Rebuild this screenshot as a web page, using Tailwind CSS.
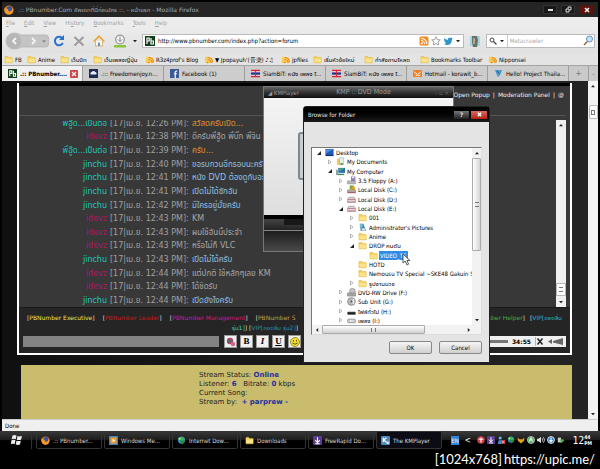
<!DOCTYPE html>
<html lang="th">
<head>
<meta charset="utf-8">
<title>PBnumber.Com - Mozilla Firefox</title>
<script src="https://cdn.jsdelivr.net/npm/@tailwindcss/browser@4"></script>
</head>
<body class="min-h-screen bg-black font-['DejaVu_Sans_Condensed','Noto_Sans_Thai','Noto_Sans',sans-serif] text-[6px] leading-[9px] text-black">
<svg class="hidden" xmlns="http://www.w3.org/2000/svg">
  <symbol id="folder" viewBox="0 0 10 10"><path d="M1 2.2Q1 1.5 1.7 1.5H4l1 1.2h3.6q.6 0 .6.7V8q0 .7-.7.7H1.600Q1 8.700 1 8z" fill="#f3cf57" stroke="#dcae38" stroke-width=".5"/><path d="M1.500 4h7.300v4H1.500z" fill="#fce38a"/></symbol>
  <symbol id="rss" viewBox="0 0 10 10"><rect x=".5" y=".5" width="9" height="9" rx="1.500" fill="#f08a24"/><circle cx="2.800" cy="7.300" r="1" fill="#fff"/><path d="M2 4.500a3.500 3.500 0 0 1 3.500 3.500M2 2.200A5.800 5.800 0 0 1 7.800 8" fill="none" stroke="#fff" stroke-width="1.100"/></symbol>
  <symbol id="feedfolder" viewBox="0 0 10 10"><path d="M1 2h3l1 1h4v6H1z" fill="#f6cf5a"/><path d="M4 5a4 4 0 0 1 4 4M4 2.500A6 6 0 0 1 9.500 8" fill="none" stroke="#ea8a20" stroke-width="1.300"/><circle cx="4" cy="8.300" r="1" fill="#ea8a20"/></symbol>
  <symbol id="fox" viewBox="0 0 12 12"><circle cx="6" cy="6" r="5.500" fill="#e8721b"/><circle cx="6.600" cy="5" r="3.600" fill="#2d55a8"/><path d="M.8 3C2 5 3 4 5.500 5.200 4.500 6 5 7.500 6.500 7.600 9 8 10 6 9.800 2.500 12.500 6 11 11.500 6 11.500 1 11.500-.2 7 .8 3z" fill="#f39a2c"/></symbol>
  <symbol id="pb" viewBox="0 0 10 10"><path d="M0 0h10v10H0z" fill="#123d1b"/><path d="M2 8V2h2.200v3H2M6 2v6h2.400V5H6" fill="none" stroke="#fff" stroke-width="1.200"/></symbol>
  <symbol id="cloud" viewBox="0 0 10 10"><path d="M0 0h10v10H0z" fill="#1d2c52"/><path d="M2 6a1.500 1.500 0 0 1 1-2.600 2.200 2.200 0 0 1 4 0A1.500 1.500 0 0 1 8 6z" fill="#e3ebfa"/></symbol>
  <symbol id="fb" viewBox="0 0 10 10"><path d="M0 0h10v10H0z" fill="#3b5998"/><path d="M8 2.300H7q-1.200 0-1.200 1.300V10M4.300 5.300h3.500" fill="none" stroke="#fff" stroke-width="1.300"/></symbol>
  <symbol id="thai" viewBox="0 0 10 10"><path d="M0 1h10v8H0z" fill="#fff"/><path d="M0 .8h10v1.700H0zM0 7.500h10v1.700H0z" fill="#d8232e"/><path d="M0 3.700h10v2.700H0z" fill="#26328c"/><path d="M5 1v8" stroke="#d8232e"/></symbol>
  <symbol id="hot" viewBox="0 0 10 10"><rect y="1" width="10" height="8" rx="1" fill="#ee7f22"/><path d="M1 3l4 3 4-3M3 7h5" fill="none" stroke="#fff"/></symbol>
  <symbol id="hello" viewBox="0 0 10 10"><path d="M1 1h8L6 8.500H4z" fill="#4a9bcb"/><path d="M3 2l3 3" stroke="#204b88"/><path d="M7 6l2 3H5z" fill="#b8d4e4"/></symbol>
  <symbol id="desk" viewBox="0 0 10 10"><path d="M.5 1h9v7h-9z" fill="#2458b8"/><path d="M1 1.500h8L1 6z" fill="#4f8ae0"/><path d="M.5 7.500h9V9h-9z" fill="#16356f"/></symbol>
  <symbol id="docs" viewBox="0 0 10 10"><path d="M1 2h4l1 1h2v6H1z" fill="#efcd58"/><path d="M4 .8h4.500v6.500H4z" fill="#e6f0f5" stroke="#7c9cb0" stroke-width=".5"/><path d="M5 7h3v2H5z" fill="#5c9a5f"/></symbol>
  <symbol id="comp" viewBox="0 0 10 10"><path d="M2.500 1H10v5.500H2.500z" fill="#2c6bb5"/><path d="M3 1.500h6.500L4 5z" fill="#48ad67"/><path d="M0 3h2.500v6H0z" fill="#8ba6ae"/><path d="M2 7.500h7V9H2z" fill="#3a8a54"/></symbol>
  <symbol id="floppy" viewBox="0 0 10 10"><path d="M4.500.5h4.800v5H4.500z" fill="#8780b8"/><path d="M5.500.5h2.600v2H5.500z" fill="#e8e6f8"/><path d="M.5 5.500h9v3.300h-9z" fill="#bdb5bd" stroke="#7f7580" stroke-width=".5"/></symbol>
  <symbol id="sysdisk" viewBox="0 0 10 10"><path d="M3 .5h4.500v4.500H3z" fill="#77a53c"/><path d="M5 2h4v3.500H5z" fill="#d9a62a"/><path d="M.5 5.500h9v3.300h-9z" fill="#c9c0b8" stroke="#7b6868" stroke-width=".6"/><path d="M1 8h8" stroke="#a23c44"/></symbol>
  <symbol id="disk" viewBox="0 0 10 10"><path d="M2 2.500h6l1.500 2.500v3h-9V5z" fill="#ddd4d6" stroke="#8c7a80" stroke-width=".6"/><path d="M.6 8h8.800M1 5h8" stroke="#b65560" stroke-width=".7"/></symbol>
  <symbol id="pics" viewBox="0 0 10 10"><path d="M2 .8h4l3 8H3z" fill="#4288b8"/><path d="M2 1h3v4H2z" fill="#79bfd3"/><path d="M4 6h4v2.500H4z" fill="#d8ecf2"/></symbol>
  <symbol id="dvd" viewBox="0 0 10 10"><circle cx="6" cy="3.600" r="3.200" fill="#c5c5c5" stroke="#777" stroke-width=".6"/><path d="M.5 5.500h9v3.500h-9z" fill="#a7a7a7" stroke="#666" stroke-width=".5"/></symbol>
  <symbol id="disc" viewBox="0 0 10 10"><circle cx="5" cy="5" r="4.300" fill="#bcbcbc" stroke="#666" stroke-width=".7"/><path d="M5 5L8 1v8z" fill="#efefef"/><circle cx="5" cy="5" r="1.200" fill="#555"/></symbol>
  <symbol id="black" viewBox="0 0 10 10"><path d="M.5 5.500h9v3h-9z" fill="#222"/><path d="M1 5.500h8" stroke="#777" stroke-width=".6"/></symbol>
  <symbol id="grey" viewBox="0 0 10 10"><rect x=".5" y="3.500" width="9" height="4" rx="1.500" fill="#c7c7c7" stroke="#777" stroke-width=".7"/><path d="M3 5.500h4" stroke="#fff"/></symbol>
  <symbol id="media" viewBox="0 0 10 10"><path d="M0 0h10v10H0z" fill="#3686c6"/><rect x="1.500" y="1.500" width="7" height="7" rx="1" fill="#f29a2a"/><path d="M4 3l3 2-3 2z" fill="#fff"/></symbol>
  <symbol id="idm" viewBox="0 0 10 10"><circle cx="5" cy="4.500" r="4" fill="#2f8ecb"/><path d="M1 3q4-4 7 0L6 6 3 5z" fill="#42b54a"/><path d="M3 5h6L6 9.500z" fill="#278a2d"/><circle cx="3" cy="3" r="1" fill="#f0e23a"/></symbol>
  <symbol id="rapid" viewBox="0 0 10 10"><rect width="10" height="10" rx="1" fill="#5b3d8f"/><path d="M5 1.500v5M2.500 4.500L5 7.500l2.500-3M2.500 8.700h5" fill="none" stroke="#fff" stroke-width="1.200"/></symbol>
  <symbol id="km" viewBox="0 0 10 10"><rect width="10" height="10" rx="1.500" fill="#4b89bd"/><path d="M2.500 2v5M6 2L3 4.500 6 7" fill="none" stroke="#fff" stroke-width="1.300"/><path d="M6 6h3v3H6z" fill="#cfe4f5"/></symbol>
  <symbol id="up" viewBox="0 0 6 6"><path d="M3 2l2 2.200H1z" fill="#222"/></symbol>
  <symbol id="down" viewBox="0 0 6 6"><path d="M1 2h4L3 4.200z" fill="#222"/></symbol>
</svg>

<div class="flex min-h-screen flex-col">
<div class="relative flex flex-col px-0.5 pt-0.5">

  <header class="flex h-[15px] items-center gap-1 bg-[#252525] pl-[2px] pr-1 text-[#a8a8a8]">
    <svg class="size-[10px]"><use href="#fox"/></svg>
    <h1 class="flex-1 whitespace-nowrap font-['DejaVu_Sans','Noto_Sans_Thai',sans-serif]">.:: PBnumber.Com อัพเดทที่นี่ก่อนใคร ::. - หน้าแรก - Mozilla Firefox</h1>
    <button aria-label="Minimize" class="flex h-[9px] w-[14px] items-end justify-center border border-[#333] bg-[#181818] pb-[2px]"><span class="h-[2px] w-[5px] bg-[#ddd]"></span></button>
    <button aria-label="Restore" class="grid h-[9px] w-[14px] place-items-center border border-[#333] bg-[#181818]"><svg class="size-[7px]" viewBox="0 0 7 7"><path d="M3 2.500V1h3v3H4.500" fill="none" stroke="#ddd"/><path d="M1 3h3v3H1z" fill="none" stroke="#ddd"/></svg></button>
    <button aria-label="Close" class="grid h-[9px] w-[15px] place-items-center border border-[#4a1712] bg-[#5b140d]"><svg class="size-[6px]" viewBox="0 0 6 6"><path d="M1 1l4 4M5 1L1 5" stroke="#fff" stroke-width="1.400"/></svg></button>
  </header>

  <nav class="flex h-[11px] items-center gap-[9px] bg-[#ececec] pl-1 text-[#a2a2a2]">
    <button><u>F</u>ile</button><button><u>E</u>dit</button><button><u>V</u>iew</button><button>Hi<u>s</u>tory</button><button><u>B</u>ookmarks</button><button><u>T</u>ools</button><button><u>H</u>elp</button>
  </nav>

  <div class="flex h-[25px] items-center bg-linear-to-b from-[#ececec] to-[#e0e0e0] pl-[3px] pr-[3px]">
    <svg class="h-[18px] w-[44px]" viewBox="0 0 44 18"><path d="M9 1q5 0 7 2h25q2.500 0 2.500 3v6q0 3-2.500 3H16q-2 2-7 2A8 8 0 0 1 9 1z" fill="#c4c4c4" stroke="#b0b0b0" stroke-width=".7"/><circle cx="9" cy="9" r="7.500" fill="#b6b6b6"/><path d="M11 6L8 9l3 3M27 6l3 3-3 3" fill="none" stroke="#f4f4f4" stroke-width="1.800"/><path d="M37 8.500h4l-2 2z" fill="#777"/></svg>
    <div class="ml-[4px] flex items-center gap-[8px]">
      <svg class="size-3" viewBox="0 0 12 12"><path d="M9.800 8A4.200 4.200 0 1 1 9 3" fill="none" stroke="#2a70d0" stroke-width="2"/><path d="M11 0v5H6z" fill="#2a70d0"/></svg>
      <svg class="size-3" viewBox="0 0 12 12"><path d="M1.500 2l9 8.500M10.500 2l-9 8.500" stroke="#9b9b9b" stroke-width="2"/></svg>
      <svg class="size-3" viewBox="0 0 12 12"><path d="M2.500 6v5h7V6" fill="#fff8e4" stroke="#c08a4c" stroke-width=".6"/><path d="M.7 6.500L6 1.300l5.300 5.200" fill="none" stroke="#e9a63a" stroke-width="1.700"/><path d="M5 7.500h2V11H5z" fill="#6a90bd"/></svg>
      <svg class="size-[14px]" viewBox="0 0 14 14"><path d="M1 11h12v2.500H1z" fill="#87c63b"/><circle cx="7" cy="5.500" r="4.300" fill="#f5f5f5" stroke="#9a9a9a" stroke-width="1.300"/><path d="M7 2.500v5M5 5.500l2 2 2-2" fill="none" stroke="#888"/></svg>
    </div>
    <svg class="ml-[5px] size-[6px]"><use href="#down"/></svg>
    <label class="ml-[4px] flex h-[14px] min-w-0 flex-3 items-center border border-[#bbb] bg-white px-[2px]">
      <svg class="size-[10px] shrink-0"><use href="#pb"/></svg>
      <input aria-label="Address" class="ml-[3px] min-w-0 flex-1 outline-none" value="http://www.pbnumber.com/index.php?action=forum">
      <svg class="size-[10px]"><use href="#rss"/></svg>
      <svg class="ml-[2px] size-[10px]" viewBox="0 0 10 10"><path d="M5 .8l1.300 2.800 3 .3L7 6l.7 3L5 7.500 2.300 9 3 6 .7 3.900l3-.3z" fill="#fff" stroke="#777" stroke-width=".7"/></svg>
      <svg class="ml-[2px] size-[10px]" viewBox="0 0 10 10"><path d="M.8 2q2 2 4 1.800Q5 1.500 7 1.500l1 .5 1.500-.3L9 3.500Q8.500 9 4 9 2 9 1 8l2-.6Q.8 5 .8 2z" fill="#2d94c8"/></svg>
      <svg class="ml-[2px] size-[6px]"><use href="#down"/></svg>
    </label>
    <svg class="mx-[5px] size-[12px]" viewBox="0 0 12 12"><path d="M1 1h10v10H1z" fill="#a3d9e6"/><path d="M3 1h5l1 4-1 7H4L3 7z" fill="#69706c"/><path d="M4 3h2v6H4z" fill="#c2a57b"/></svg>
    <label class="flex h-[14px] min-w-0 flex-1 items-center border border-[#bbb] bg-white pl-[2px]">
      <svg class="size-[8px] shrink-0" viewBox="0 0 8 8"><circle cx="3" cy="3" r="2" fill="none" stroke="#444"/><path d="M4.500 4.500L7.500 7.500" stroke="#444" stroke-width="1.300"/></svg>
      <svg class="ml-[2px] size-[6px] shrink-0"><use href="#down"/></svg>
      <input aria-label="Search" class="ml-[2px] h-full min-w-0 flex-1 border-l border-[#ccc] pl-[2px] outline-none placeholder:text-[#aaa]" placeholder="Metacrawler">
      <svg class="size-[11px] shrink-0" viewBox="0 0 11 11"><circle cx="6.500" cy="4" r="3" fill="#c5e2f7" stroke="#5c93c5"/><path d="M4.300 6.500L1 10" stroke="#a06a42" stroke-width="1.600"/></svg>
    </label>
  </div>

  <nav class="flex h-3 items-center overflow-hidden whitespace-nowrap bg-[#e4e4e4] pl-[2px]" id="bookmarks"></nav>

  <nav class="flex h-4 overflow-hidden border-t border-[#a5a5a5] bg-[#c9c9c9]" id="tabs"></nav>

  <div class="flex bg-linear-to-r from-[#101010] to-[#242424]">
    <main class="min-w-0 flex-1 pr-4">
      <section class="ml-[15px] mt-[2px] border-2 border-t-0 border-white bg-[#252525]">
        <div class="h-[3px] bg-black"></div>
        <div class="bg-[#383838] pr-1">
          <div class="flex h-[30px] justify-end gap-[3px] border-b border-[#555] pr-[2px] pt-1 font-['DejaVu_Sans',sans-serif] text-[#eee]">
            <a href="#">Open Popup</a>|<a href="#">Moderation Panel</a>|<a href="#">@</a>
          </div>
          <div class="mt-1 flex h-[187px]">
            <div class="flex flex-1 flex-col justify-end overflow-hidden">
              <ol id="chat" class="grid h-[191px] shrink-0 auto-rows-fr font-['DejaVu_Sans','Noto_Sans_Thai',sans-serif] text-[8px] leading-[13px]"></ol>
            </div>
            <div class="flex w-[10px] flex-col items-center justify-between bg-[#f0f0f0] py-[2px]" aria-hidden="true">
              <svg class="size-[6px]"><use href="#up"/></svg><div class="mt-auto mb-[3px] flex h-[13px] w-full items-center justify-center border border-[#bbb] bg-white"><span class="h-[5px] w-[4px] border-y border-[#777]"></span></div><svg class="size-[6px]"><use href="#down"/></svg>
            </div>
          </div>
        </div>
        <div class="flex justify-between whitespace-nowrap border-t border-[#1a1a1a] px-2 pt-[5px] font-['DejaVu_Sans','Noto_Sans_Thai',sans-serif] leading-[10px] text-[#ddd]">
          <div class="flex gap-2"><span>[<a href="#" class="text-[#e8e84a]">PBNumber Executive</a>]</span><span>[<a href="#" class="text-[#c01d1d]">PBNumber Leader</a>]</span><span>[<a href="#" class="text-[#cc1c80]">PBNumber Management</a>]</span><span>[<a href="#" class="text-[#d89a3c]">PBNumber S</a></span></div>
          <div class="flex gap-[5px]"><span><a href="#" class="text-[#3fae4c]">PBNumber Helper</a>]</span><span>[<a href="#" class="text-[#28b8c0]">VIP[ถอดลิ่ม</a></span></div>
        </div>
        <div class="pb-[2px] pl-[213px] font-['DejaVu_Sans','Noto_Sans_Thai',sans-serif] leading-[10px] text-[#ddd]"><a href="#" class="text-[#3fd0c8]">รุ่น1]</a>] [<a href="#" class="text-[#2a8fae]">VIP[ถอดลิ่ม รุ่น2]</a>]</div>
        <div class="flex items-center gap-[3px] px-1 pb-[5px]">
          <input aria-label="Message" class="mr-[2px] h-[11px] w-[196px] bg-[#838383] outline-none">
          <button aria-label="Font colour" class="grid size-[13px] place-items-center border border-[#999] bg-[#f0f0f0]"><svg class="size-[10px]" viewBox="0 0 10 10"><circle cx="4" cy="4" r="3.200" fill="#a44769"/><circle cx="3.500" cy="4" r="1.500" fill="#4f6b76"/><circle cx="7" cy="7" r="2.300" fill="#d9668a"/></svg></button>
          <button class="size-[13px] border border-[#999] bg-[#f0f0f0] font-['Liberation_Serif',serif] text-[9px] font-bold leading-[11px]">B</button>
          <button class="size-[13px] border border-[#999] bg-[#f0f0f0] font-['Liberation_Serif',serif] text-[9px] font-bold italic leading-[11px]">I</button>
          <button class="size-[13px] border border-[#999] bg-[#f0f0f0] font-['Liberation_Serif',serif] text-[9px] font-bold leading-[11px] underline">U</button>
          <button aria-label="Smileys" class="grid size-[13px] place-items-center border border-[#999] bg-[#f0f0f0]"><svg class="size-[10px]" viewBox="0 0 10 10"><circle cx="5" cy="5" r="4.500" fill="#f6dc2c" stroke="#7b6a10" stroke-width=".7"/><path d="M3.500 3v1.500M6.500 3v1.500M2.500 6q2.500 2.500 5 0" fill="none" stroke="#333" stroke-width=".8"/></svg></button>
          <div class="ml-auto flex h-[11px] w-[110px] items-center justify-end gap-[4px] bg-[#efefef] pr-[3px] font-['DejaVu_Sans',sans-serif] font-bold">
            <span class="h-[3px] flex-1 bg-[#777]"></span>34:55
            <svg class="size-[9px]" viewBox="0 0 9 9"><path d="M.5 0v9" stroke="#999" stroke-width=".7"/><path d="M2.500 1.500l5 6M7.500 1.500l-5 6" stroke="#222" stroke-width="1.500"/></svg>
            <svg class="h-[7px] w-[15px]" viewBox="0 0 15 7"><path d="M0 3.500L4 1v5zM5 3L15 0v7L5 4.500z" fill="#666"/></svg>
          </div>
        </div>
      </section>
      <section class="ml-[19px] mt-[10px] h-[54px] bg-[#cabc6d] pl-[178px] pt-[6px] font-['DejaVu_Sans',sans-serif] text-[7px] leading-[9px] text-[#222]">
        <p>Stream Status: <b class="text-[#1b2fa0]">Online</b></p>
        <p>Listener: <b class="text-[#1b2fa0]">6</b> &nbsp; Bitrate: <b class="text-[#1b2fa0]">0</b> kbps</p>
        <p>Current Song:</p>
        <p>Stream by: &nbsp;<b class="text-[#1b2fa0]">+ parprew -</b></p>
      </section>
    </main>
    <div class="flex w-[10px] flex-col items-center bg-[#f3f3f3] py-[2px]" aria-hidden="true">
      <svg class="size-[6px]"><use href="#up"/></svg>
      <div class="mt-4 flex h-[14px] w-[9px] items-center justify-center rounded-[1px] border border-[#bbb] bg-white"><span class="h-[5px] w-[4px] border border-[#777]"></span></div>
      <svg class="mt-auto size-[6px]"><use href="#down"/></svg>
    </div>
  </div>

  <div class="h-3 border-t border-[#ccc] bg-[#f0eff0] pl-[3px] leading-[11px]">Done</div>

  <!-- KMPlayer window -->
  <section class="absolute left-[263px] top-[86px] w-[191px] border border-[#777] bg-[#222]">
    <div class="flex h-[11px] items-center justify-between bg-linear-to-b from-[#666] via-[#333] to-[#111] px-1 text-[#999]"><span class="w-[60px]">◢ KMPlayer</span><span class="text-[7px]">KMP :: DVD Mode</span><span class="w-[50px] text-right text-[#666]">– ▫ ×</span></div>
    <div class="flex h-[117px] flex-col bg-linear-to-b from-[#f4f4f4] to-[#dedede] pt-[34px]"><div class="ml-[34px] h-[48px] w-[60px] rounded-[3px] border-2 border-[#7c8790] bg-[#ccc]"></div></div>
    <div class="h-[4px] bg-black"></div>
    <div class="flex h-[12px] justify-start border-b border-[#888] bg-linear-to-b from-[#444] to-[#222] pl-5"><span class="h-[6px] w-20 bg-[#181818]"></span></div>
    <div class="h-[20px] bg-linear-to-b from-[#1d1d1d] to-[#4a4a4a]"></div>
  </section>

  <!-- Browse for Folder dialog -->
  <section role="dialog" aria-labelledby="dlg" class="absolute left-[303px] top-[106px] w-[187px] rounded-t-[3px] border border-[#222] bg-[#e4e4e4]">
    <div class="flex h-[15px] items-center gap-[2px] bg-linear-to-b from-black to-[#1c1c1c] pl-1 pr-[2px] text-[#e4e4e4]">
      <h2 id="dlg" class="flex-1">Browse for Folder</h2>
      <button aria-label="Help" class="h-[8px] w-[15px] bg-linear-to-b from-[#777] to-[#222] font-bold leading-[8px]">?</button>
      <button aria-label="Close" class="grid h-[8px] w-[16px] place-items-center bg-linear-to-b from-[#d8695c] to-[#b51a10]"><svg class="size-[5px]" viewBox="0 0 6 6"><path d="M1 1l4 4M5 1L1 5" stroke="#fff" stroke-width="1.600"/></svg></button>
    </div>
    <div class="px-[7px] pb-[8px] pt-[25px]">
      <div class="border border-[#777] border-b-[#ddd] border-r-[#ddd] bg-white">
        <div class="flex h-[177px]">
          <ul id="tree" class="grid min-w-0 flex-1 auto-rows-fr overflow-hidden whitespace-nowrap"></ul>
          <div class="flex w-[9px] flex-col items-center bg-[#f2f2f2]" aria-hidden="true">
            <svg class="my-[2px] size-[6px]"><use href="#up"/></svg><div class="flex h-[93px] w-full items-center justify-center rounded-[1px] border border-[#aaa] bg-linear-to-r from-white to-[#d5d5d5]"><span class="h-[5px] w-[4px] border-y border-[#777]"></span></div><svg class="mb-[2px] mt-auto size-[6px]"><use href="#down"/></svg>
          </div>
        </div>
        <div class="flex h-[9px] items-center bg-[#f2f2f2] pr-[9px]" aria-hidden="true">
          <svg class="mx-[2px] size-[6px] -rotate-90"><use href="#up"/></svg><div class="flex h-[9px] w-[103px] items-center justify-center rounded-[1px] border border-[#aaa] bg-linear-to-b from-white to-[#d0d0d0]"><span class="h-[4px] w-[5px] border-x border-[#777]"></span></div><svg class="ml-auto size-[6px] rotate-90"><use href="#up"/></svg>
        </div>
      </div>
      <div class="mt-[6px] flex justify-end gap-[7px]">
        <button class="h-[13px] w-[43px] rounded-[2px] border border-[#888] bg-linear-to-b from-[#f5f5f5] to-[#d0d0d0]">OK</button>
        <button class="h-[13px] w-[43px] rounded-[2px] border border-[#888] bg-linear-to-b from-[#f5f5f5] to-[#d0d0d0]">Cancel</button>
      </div>
    </div>
  </section>
  <svg class="absolute left-[402px] top-[253px] h-[13px] w-[9px]" viewBox="0 0 9 13"><path d="M1 1v9l2.200-2L5 12l1.600-.8L5 7.500h3z" fill="#fff" stroke="#333" stroke-width=".8"/></svg>
</div>

<div class="flex h-[18px] items-center bg-linear-to-b from-[#3a3a3a] from-0% via-[#1c1c1c] via-50% to-black to-55% px-0.5 text-[#ddd]">
  <button aria-label="Start" class="grid h-full w-[30px] place-items-center border-r border-[#333]"><svg class="size-3" viewBox="0 0 12 12"><path d="M1.500 1.500q2-1 4 0L4.700 5.200q-2-.8-4 0zM6.500 2q2 .8 4.500 0L10 5.700q-2 .8-4.200 0zM.5 6.200q2-.8 4 0l-.8 3.900q-2-.9-4 0zM5.500 6.700q2 .8 4.300 0L9 10.600q-2 .8-4.300 0z" fill="#eee"/></svg></button>
  <div class="ml-1 flex h-full min-w-0 gap-[2px]" id="tasks"></div>
  <div class="ml-auto flex items-center gap-[2px] pr-[6px]">
    <span class="mr-1 bg-[#2c85d6] text-white">EN</span><span class="mr-[4px] text-[8px] text-white">&lt;</span>
    <svg class="size-2" viewBox="0 0 10 10"><circle cx="5" cy="5" r="4.700" fill="#d23b40"/><path d="M2 4h6M5 2v6" stroke="#fff" stroke-width="1.400"/></svg>
    <svg class="size-2"><use href="#rapid"/></svg>
    <svg class="size-2" viewBox="0 0 10 10"><circle cx="4" cy="2.500" r="2" fill="#6bb4ec"/><path d="M1 10q0-5 3-5t3 5z" fill="#3f86cf"/><path d="M5 5h5v5H5z" fill="#d43a3a"/><path d="M6 7.500h3" stroke="#fff"/></svg>
    <svg class="size-2"><use href="#idm"/></svg>
    <svg class="size-2" viewBox="0 0 10 10"><path d="M1 2l2 2h4l2-2v4L5 9.500 1 6z" fill="#e3a01e"/></svg>
    <svg class="size-2" viewBox="0 0 10 10"><circle cx="5" cy="5" r="4.500" fill="#57b167" stroke="#ddd" stroke-width=".8"/><path d="M3 7l2-5 2 5M3 5h4" fill="none" stroke="#fff"/></svg>
    <svg class="size-2" viewBox="0 0 10 10"><path d="M0 3.500h2L5 1v8L2 6.500H0z" fill="#ddd"/><path d="M6.500 3q1.500 2 0 4M8 1.500q3 3.500 0 7" fill="none" stroke="#ddd"/></svg>
    <svg class="size-2" viewBox="0 0 10 10"><circle cx="5" cy="5" r="4.300" fill="#2f80c0" stroke="#fff"/><path d="M5 2v5M3 5l2 2.500L7 5" fill="none" stroke="#fff" stroke-width="1.300"/></svg>
    <svg class="size-2" viewBox="0 0 10 10"><path d="M1 2h4v6H1z" fill="#ccc"/><path d="M4 4h4l1 2-4 3z" fill="#4cb04c"/></svg>
    <time class="ml-[6px] flex items-center text-white"><span class="text-[10px]">12</span><span class="text-[5px] font-bold leading-[6px]">44<br>PM</span></time>
  </div>
</div>

<footer class="flex flex-1 items-center justify-end gap-[2px] pr-[5px] font-['Lato',sans-serif] text-[13px] leading-[16px] text-white"><span>[1024x768]</span><a href="#">https://upic.me/</a></footer>
</div>

<script>
const icon = (id, cls) => `<svg class="${cls}"><use href="#${id}"/></svg>`;

const bookmarks = [
  ['folder','FB','w-[23px]'],['folder','Anime','w-[33px]'],['folder','เว็บบิท','w-[33px]'],['folder','เว็บเพลงญี่ปุ่น','w-[52px]'],
  ['feedfolder',"R3z4prof's Blog",'w-[59px]'],['feedfolder',"▼ Jpopayuh'(音楽) ♪♫",'w-[77px]'],['feedfolder','jpfiles','w-[32px]'],
  ['folder','เริ่มหัวข้อใหม่','w-[51px]'],['folder','กำลังถามโหลด','w-[56px]'],['folder','Bookmarks Toolbar','w-[68px]'],['feedfolder','Nipponsei','w-[50px]']];
document.getElementById('bookmarks').innerHTML = bookmarks.map(([i,t,w]) =>
  `<a href="#" class="flex shrink-0 items-center gap-[2px] ${w}">${icon(i,'size-[9px] shrink-0')}${t}</a>`).join('');

const tabs = [['pb','.:: PBnumber....'],['cloud','.::: Freedomenjoy.n...'],['fb','Facebook (1)'],['thai','SiamBiT: หนัง เพลง โ...'],['thai','SiamBiT: หนัง เพลง โ...'],['hot','Hotmail - korawit_b...'],['hello','Hello! Project Thaila...']];
document.getElementById('tabs').innerHTML = tabs.map(([i,t],n) =>
  `<button class="${n ? 'bg-[#cdcdcd]' : 'bg-[#f0f0f0] font-bold'} flex min-w-0 flex-1 items-center gap-[3px] overflow-hidden whitespace-nowrap border-r border-[#9e9e9e] pl-[6px] pr-1 text-left">${icon(i,'size-[9px] shrink-0')}<span class="flex-1">${t}</span>${n ? '' : '<svg class="size-2 shrink-0" viewBox="0 0 8 8"><rect width="8" height="8" rx="1" fill="#cf4545"/><path d="M2 2l4 4M6 2L2 6" stroke="#fff" stroke-width="1.200"/></svg>'}</button>`).join('') +
  '<button class="w-5 border-r border-[#9e9e9e] text-[8px] text-[#777]">+</button><button class="w-[9px] text-[#555]">-</button>';

const chat = [
  ['พี่อู๊ด...เป็นต่อ','12:26','สวัสดีครับเปิด...','text-[#e0952a]'],['idevz','12:38','ดีครับพี่อู๊ด พี่บิ๊ก พี่จิน','text-[#a8a8a8]'],
  ['พี่อู๊ด...เป็นต่อ','12:39','ครับ...','text-[#e0952a]'],['jinchu','12:40','ขอรบกวนอีกรอบนะครับ','text-[#8fc0e4]'],
  ['jinchu','12:41','หนัง DVD ต้องดูกับอะไร','text-[#8fc0e4]'],['jinchu','12:41','เปิดไม่ได้ซักอัน','text-[#8fc0e4]'],
  ['jinchu','12:42','มีใครอยู่มั้ยครับ','text-[#8fc0e4]'],['idevz','12:43','KM','text-[#a8a8a8]'],['idevz','12:43','ผมใช้อันนี้ประจำ','text-[#a8a8a8]'],
  ['idevz','12:43','หรือไม่ก็ VLC','text-[#a8a8a8]'],['jinchu','12:43','เปิดไม่ได้ครับ','text-[#8fc0e4]'],['idevz','12:44','แต่ปกติ ใช้หลักๆเลย KM','text-[#a8a8a8]'],
  ['idevz','12:44','ได้ชิดรับ','text-[#a8a8a8]'],['jinchu','12:44','เปิดยังไงครับ','text-[#8fc0e4]']];
document.getElementById('chat').innerHTML = chat.map(([n,t,m,c]) =>
  `<li class="grid grid-cols-[88px_79px_1fr] items-end gap-x-[3px] whitespace-nowrap text-[#a0a0a0]"><b class="${n==='idevz' ? 'text-[#b01664]' : 'text-[#20c8b8]'} text-right font-normal">${n}</b><time>[17|เม.ย. ${t} PM]:</time><span class="${c}">${m}</span></li>`).join('');

const pads = ['pl-[4px]','pl-[15px]','pl-[26px]','pl-[37px]','pl-[48px]'];
const tree = [[0,'o','desk','Desktop'],[1,'c','docs','My Documents'],[1,'o','comp','My Computer'],[2,'c','floppy','3.5 Floppy (A:)'],[2,'c','sysdisk','Local Disk (C:)'],[2,'c','disk','Local Disk (D:)'],[2,'o','disk','Local Disk (E:)'],[3,'c','folder','001'],[3,'c','pics',"Administrator's Pictures"],[3,'c','folder','Anime'],[3,'o','folder','DROP คนดับ'],[4,'','folder','VIDEO_TS'],[3,'','folder','HOTD'],[3,'','folder','Nemousu TV Special ~SKE48 Gakuin Special'],[3,'c','folder','รูปงานบวช'],[2,'c','dvd','DVD-RW Drive (F:)'],[2,'c','disc','Sub Unit (G:)'],[2,'c','black','ไฟล์ทั่วไป (H:)'],[2,'c','grey','เพลง (I:)']];
const arrows = {o:'<path d="M5 1v4H1z" fill="#222"/>', c:'<path d="M1.500 1l2.500 2-2.500 2z" fill="#fff" stroke="#999" stroke-width=".7"/>', '':''};
document.getElementById('tree').innerHTML = tree.map(([l,a,i,t]) =>
  `<li class="flex items-center ${pads[l]}"><svg class="size-[6px] shrink-0" viewBox="0 0 6 6">${arrows[a]}</svg>${icon(i,'ml-[3px] size-[9px] shrink-0')}<span class="${i==='folder'&&l===4 ? 'bg-[#2f8be6] text-white' : ''} ml-[1px] px-[1px]">${t}</span></li>`).join('');

const tasks = [['fox','.:: PBnumber...'],['media','Windows Me...'],['idm','Internet Dow...'],['folder','Downloads'],['rapid','FreeRapid Do...'],['km','The KMPlayer']];
document.getElementById('tasks').innerHTML = tasks.map(([i,t],n) =>
  `<button class="${n===5 ? 'bg-[#0c0c14]' : ''} flex w-[66px] items-center gap-[3px] overflow-hidden whitespace-nowrap rounded-[2px] border border-[#333] pl-1">${icon(i,'size-[9px] shrink-0')}${t}</button>`).join('');
</script>
</body>
</html>
